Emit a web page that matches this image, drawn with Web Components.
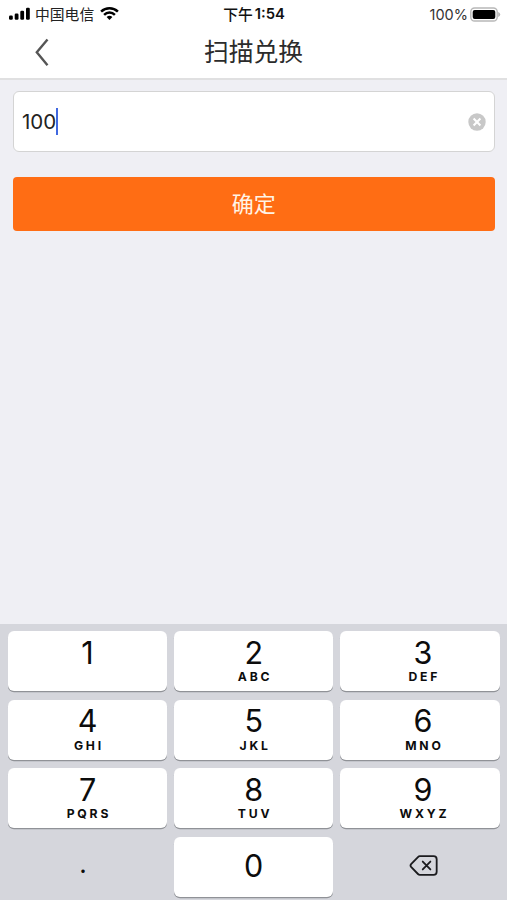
<!DOCTYPE html>
<html lang="zh-CN">
<head>
<meta charset="utf-8">
<title>扫描兑换</title>
<style>
html,body{margin:0;height:100%}
body{background:#efeff4;overflow:hidden;font-family:Inter,"Noto Sans CJK SC",sans-serif}
</style>
</head>
<body>
<scan-page></scan-page>
<script>
function define(name, html) {
  customElements.define(name, class extends HTMLElement {
    constructor() {
      super();
      this.attachShadow({mode: 'open'});
    }
    connectedCallback() {
      this.shadowRoot.innerHTML = typeof html === 'function' ? html(this) : html;
    }
  });
}

define('status-bar', `
<style>
:host{display:grid;grid-template-columns:1fr auto 1fr;align-items:center;height:27px;padding:0 6px 0 9px;box-sizing:border-box;background:#fff;color:#222;font-size:14px;line-height:27px;white-space:nowrap}
svg{display:block;flex:none}
.left,.right,.mid{display:flex;align-items:center;height:27px}
.carrier{font-size:14.8px;margin:0 6px 0 5px;padding-top:3px}
.mid{font-weight:600;color:#111;gap:2px;font-size:14.8px;margin-right:2px;padding-top:1px}
.cjk{font-weight:500;font-size:14.8px;padding-top:1px}
.right{justify-content:flex-end;gap:2px;color:#333;font-size:14.5px}
</style>
<div class="left">
<svg width="21" height="14" viewBox="0 0 21 14" fill="#000"><rect x="0" y="8.6" width="3.8" height="4.2" rx="1.2"/><rect x="5.7" y="6.6" width="3.8" height="6.2" rx="1.2"/><rect x="11.3" y="3.8" width="3.8" height="9" rx="1.2"/><rect x="17" y="0.7" width="3.8" height="12.1" rx="1.2"/></svg>
<span class="carrier">中国电信</span>
<svg width="19" height="14" viewBox="0 0 19 14"><g fill="none" stroke="#000" stroke-width="2.5"><path d="M1.1 4.7A12.1 12.1 0 0 1 17.9 4.7"/><path d="M4.1 7.8A7.7 7.7 0 0 1 14.9 7.8"/></g><path d="M6.6 10.1a4.2 4.2 0 0 1 5.8 0L9.5 13.1z"/></svg>
</div>
<div class="mid"><span class="cjk">下午</span><span>1:54</span></div>
<div class="right"><span>100%</span>
<svg width="31" height="15" viewBox="0 0 31 15"><rect x=".8" y="1" width="26.4" height="13" rx="3.8" fill="#fff" stroke="#b8b8b8" stroke-width="1.4"/><rect x="2.7" y="2.9" width="22.6" height="9.2" rx="2" fill="#000"/><path d="M28.2 5v5q2-.8 2-2.5t-2-2.5z" fill="#b5b5b5"/></svg>
</div>`);

define('nav-bar', `
<style>
:host{display:grid;grid-template-columns:84px 1fr 84px;align-items:center;height:53px;box-sizing:border-box;border-bottom:2px solid #e0e0e1;background:#fff;color:#2b2b2b}
svg{display:block;margin:0 0 1px 34px}
h1{margin:0;text-align:center;font-size:24.8px;font-weight:400;line-height:48px;padding-bottom:1px}
</style>
<svg width="16" height="30" viewBox="0 0 16 30" fill="none" stroke="#555" stroke-width="2.4"><path d="M13.5 2.5 2.8 15.3 13.5 28.2"/></svg>
<h1><slot></slot></h1>`);

define('code-field', `
<style>
:host{display:flex;align-items:center;height:61px;box-sizing:border-box;border:1.4px solid #d4d4d4;border-radius:6px;background:#fff;padding:0 8px 1px;color:#222;font-size:20.5px}
.caret{width:2px;height:27px;background:#4068e0;margin:0 auto 0 0}
svg{display:block;margin-top:1px}
</style>
<span><slot></slot></span><i class="caret"></i>
<svg width="18" height="18" viewBox="0 0 18 18"><circle cx="9" cy="9" r="8.7" fill="#c8c8c8"/><path d="M5.6 5.6l6.8 6.8m0-6.8l-6.8 6.8" stroke="#fff" stroke-width="2.1"/></svg>`);

define('primary-button', `
<style>
:host{display:flex;align-items:center;justify-content:center;box-sizing:border-box;height:53.5px;padding-top:2px;border-radius:4px;background:#ff6d14;color:#fff4e6;font-size:22px;line-height:51px}
</style><slot></slot>`);

define('key-cap', el => `
<style>
:host{display:flex;flex-direction:column;align-items:center;box-sizing:border-box;height:60px;padding-top:4.8px;border-radius:6px;background:#fff;box-shadow:0 1.3px 0 #909297;color:#0c0c0c}
:host([plain]){background:none;box-shadow:none}
:host([single]){padding-top:12px}
:host([shift]){padding-left:6px}
b{font-weight:400;font-size:30.5px;line-height:34px}
:host([dot]) b{padding-right:9px}
:host([dot]) b{font-size:26px;line-height:29px}
small{font-size:12.2px;line-height:14px;font-weight:700;letter-spacing:2.8px;padding:.2px 0 0 2.8px}
</style>
<b><slot></slot></b>${el.getAttribute('letters') ? `<small>${el.getAttribute('letters')}</small>` : ''}`);

define('delete-icon', `
<style>:host{display:block}svg{display:block;margin:6px 0 0 7px}</style>
<svg width="29" height="21" viewBox="0 0 30 22" fill="none" stroke="#1b1b1e" stroke-width="1.9" stroke-linejoin="round" stroke-linecap="round"><path d="M11.2 1.2h14.3q3.3 0 3.3 3.3v13q0 3.3-3.3 3.3H11.2q-1.1 0-2-.9L2 12.4q-1.2-1.4 0-2.8l7.2-7.5q.9-.9 2-.9z"/><path d="M14.2 6.9l8 8.2m0-8.2l-8 8.2"/></svg>`);

define('number-pad', `
<style>
:host{display:grid;grid-template-columns:repeat(3,1fr);grid-auto-rows:60px;gap:8.6px 7.2px;box-sizing:border-box;height:276px;padding:7px 7.5px 0 8px;background:#d5d6dc}
</style>
<key-cap>1</key-cap><key-cap letters="ABC">2</key-cap><key-cap shift letters="DEF">3</key-cap>
<key-cap letters="GHI">4</key-cap><key-cap letters="JKL">5</key-cap><key-cap shift letters="MNO">6</key-cap>
<key-cap letters="PQRS">7</key-cap><key-cap letters="TUV">8</key-cap><key-cap shift letters="WXYZ">9</key-cap>
<key-cap plain single dot>.</key-cap><key-cap single>0</key-cap><key-cap plain single><delete-icon></delete-icon></key-cap>`);

define('scan-page', `
<style>
:host{display:flex;flex-direction:column;height:900px;background:#efeff4}
main{flex:1;display:flex;flex-direction:column;gap:25px;padding:11px 12.5px 0 13px}
</style>
<status-bar></status-bar>
<nav-bar>扫描兑换</nav-bar>
<main><code-field>100</code-field><primary-button>确定</primary-button></main>
<number-pad></number-pad>`);
</script>
</body>
</html>
